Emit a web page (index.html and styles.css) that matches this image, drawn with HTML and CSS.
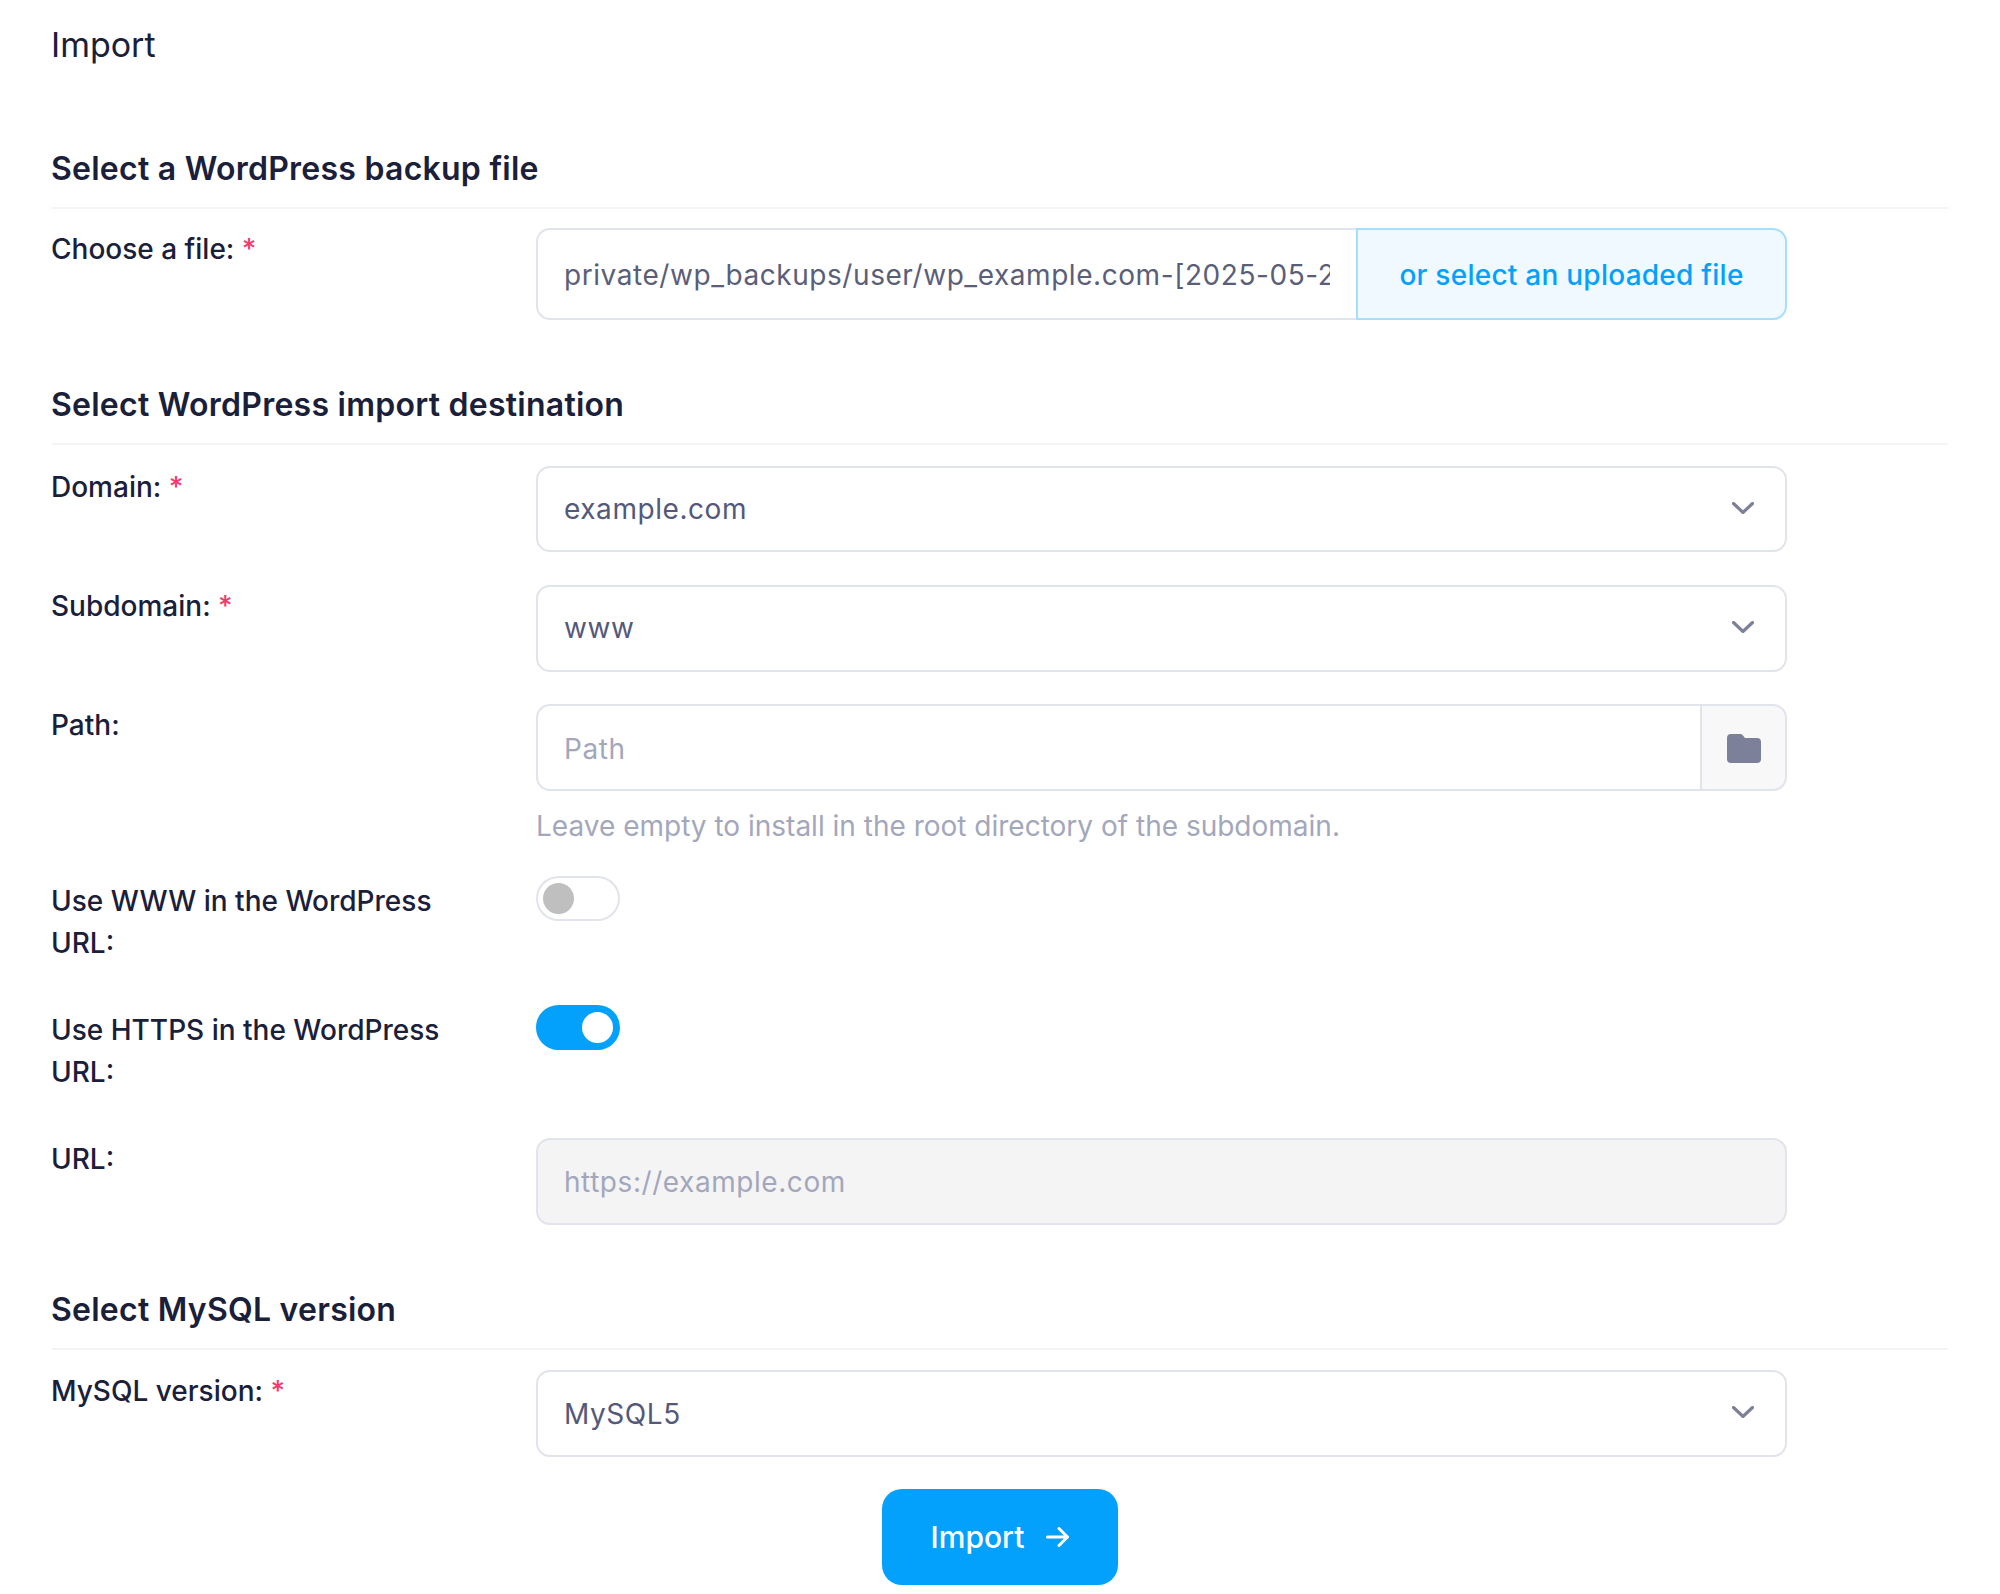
FILE: index.html
```html
<!DOCTYPE html>
<html lang="en">
<head>
<meta charset="utf-8">
<title>Import</title>
<link rel="stylesheet" href="styles.css">
</head>
<body>
<main class="page">
  <h1 class="page-title">Import</h1>
  <form class="form">
    <section class="section section-first">
      <h2 class="section-title">Select a WordPress backup file</h2>
      <div class="row">
        <label class="label">Choose a file: <span class="req">*</span></label>
        <div class="control">
          <div class="group group-file">
            <input class="input input-file" type="text" value="private/wp_backups/user/wp_example.com-[2025-05-20_12-00-00].tar.gz">
            <button type="button" class="file-btn">or select an uploaded file</button>
          </div>
        </div>
      </div>
    </section>
    <section class="section">
      <h2 class="section-title section-title-dest">Select WordPress import destination</h2>
      <div class="row">
        <label class="label">Domain: <span class="req">*</span></label>
        <div class="control">
          <div class="select"><span>example.com</span>
            <svg class="chev" viewBox="0 0 22 12" width="22" height="12"><path d="M1.500 1.500 11 10.500 20.500 1.500" fill="none" stroke="#7d8099" stroke-width="3.200" stroke-linecap="round" stroke-linejoin="miter"/></svg>
          </div>
        </div>
      </div>
      <div class="row">
        <label class="label">Subdomain: <span class="req">*</span></label>
        <div class="control">
          <div class="select"><span>www</span>
            <svg class="chev" viewBox="0 0 22 12" width="22" height="12"><path d="M1.500 1.500 11 10.500 20.500 1.500" fill="none" stroke="#7d8099" stroke-width="3.200" stroke-linecap="round" stroke-linejoin="miter"/></svg>
          </div>
        </div>
      </div>
      <div class="row row-path">
        <label class="label">Path:</label>
        <div class="control">
          <div class="group">
            <input class="input input-path" type="text" placeholder="Path">
            <span class="addon">
              <svg viewBox="0 0 34 30" width="34" height="30"><path d="M4 1h9c1.400 0 2.400.600 3.200 1.700L18 5h12a4 4 0 0 1 4 4v17a4 4 0 0 1-4 4H4a4 4 0 0 1-4-4V5a4 4 0 0 1 4-4z" fill="#7d8099"/></svg>
            </span>
          </div>
          <p class="help">Leave empty to install in the root directory of the subdomain.</p>
        </div>
      </div>
      <div class="row row-toggle">
        <label class="label">Use WWW in the WordPress URL:</label>
        <div class="control"><span class="toggle"><span class="knob"></span></span></div>
      </div>
      <div class="row row-toggle row-toggle-last">
        <label class="label">Use HTTPS in the WordPress URL:</label>
        <div class="control"><span class="toggle toggle-on"><span class="knob"></span></span></div>
      </div>
      <div class="row">
        <label class="label label-url">URL:</label>
        <div class="control"><input class="input input-disabled" type="text" value="https://example.com" disabled></div>
      </div>
    </section>
    <section class="section section-last">
      <h2 class="section-title">Select MySQL version</h2>
      <div class="row">
        <label class="label">MySQL version: <span class="req">*</span></label>
        <div class="control">
          <div class="select select-mysql"><span>MySQL5</span>
            <svg class="chev" viewBox="0 0 22 12" width="22" height="12"><path d="M1.500 1.500 11 10.500 20.500 1.500" fill="none" stroke="#7d8099" stroke-width="3.200" stroke-linecap="round" stroke-linejoin="miter"/></svg>
          </div>
        </div>
      </div>
    </section>
    <div class="actions">
      <button type="button" class="submit">Import
        <svg class="arrow" viewBox="0 0 23 20" width="23" height="20"><path d="M1.500 10H21.500M13 1.500l8.500 8.500-8.500 8.500" fill="none" stroke="#fff" stroke-width="3" stroke-linecap="round" stroke-linejoin="round"/></svg>
      </button>
    </div>
  </form>
</main>
</body>
</html>
```
FILE: styles.css
```css
* { box-sizing: border-box; }
html, body { margin: 0; padding: 0; background: #fff; }
body { font-family: Inter, "Liberation Sans", sans-serif; font-size: 28px; line-height: 42px; color: #1a2039; }
.page { padding: 22px 52px 9px; }
.page-title { margin: 0; font-size: 34px; line-height: 46px; font-weight: 400; text-indent: -1px; }
.section-first { margin-top: 81px; }
.section + .section { margin-top: 65px; }
.section-last.section { margin-top: 65.33px; }
.section-title { margin: 0 0 20.67px; padding-bottom: 18px; font-size: 32px; line-height: 40px; font-weight: 600; letter-spacing: 0.25px; text-indent: -1px; border-bottom: 2px solid #f4f4f6; }
.section-first .section-title { margin-bottom: 19px; }
.section-last .section-title { margin-bottom: 20px; }
.row { display: flex; margin-bottom: 32.67px; }
.row-path { margin-bottom: 29px; }
.row-toggle { margin-bottom: 41px; }
.row-toggle-last { margin-bottom: 45px; }
.section .row:last-child { margin-bottom: 0; }
.label { display: block; flex: 0 0 485px; margin-left: -1px; padding: 0 40px 0 0; font-weight: 500; }
.row-toggle .label { padding-top: 4px; }
.req { color: #f5386e; }
.control { width: 1251px; }
.input { display: block; font: inherit; letter-spacing: 0.56px; height: 86.67px; width: 100%; padding: 21px 26px 19px; border: 2px solid #e2e4ec; border-radius: 14px; color: #5a5e78; background: #fff; outline: none; }
.input::placeholder { color: #a3a7bb; opacity: 1; }
.input-disabled { background: #f4f4f5; color: #a3a7bb; -webkit-text-fill-color: #a3a7bb; opacity: 1; }
.group { display: flex; width: 100%; }
.group-file { height: 92px; }
.input-file { flex: 1; min-width: 0; height: 92px; padding: 22px 26px 20px; border-right: 0; border-radius: 14px 0 0 14px; }
.file-btn { flex: 0 0 431px; font: inherit; font-weight: 500; letter-spacing: 0.25px; color: #03a1fc; background: #f0f9ff; border: 2px solid #a6defe; border-radius: 0 14px 14px 0; padding: 2px 0 0; }
.input-path { flex: 1; min-width: 0; border-right: 0; border-radius: 14px 0 0 14px; }
.addon { flex: 0 0 87px; display: flex; align-items: center; justify-content: center; background: #f8f8f9; border: 2px solid #e2e4ec; border-radius: 0 14px 14px 0; }
.select { position: relative; display: flex; align-items: center; height: 86.67px; padding: 0 26px; border: 2px solid #e2e4ec; border-radius: 14px; color: #54587a; letter-spacing: 0.56px; }
.select-mysql { padding-top: 1px; }
.chev { position: absolute; right: 31px; top: 34px; }
.help { margin: 14px 0 0; color: #a3a7bb; font-size: 28px; line-height: 42px; }
.toggle { display: block; position: relative; width: 84px; height: 45px; border: 2px solid #e2e4ec; border-radius: 24px; background: #fff; }
.knob { position: absolute; left: 5px; top: 5px; width: 31px; height: 31px; border-radius: 50%; background: #bfbfbf; }
.toggle-on { background: #03a1fc; border-color: #03a1fc; }
.toggle-on .knob { left: auto; right: 5px; background: #fff; }
.actions { display: flex; justify-content: center; margin-top: 32.33px; }
.submit { display: flex; align-items: center; justify-content: center; gap: 22px; width: 236px; height: 96px; font: inherit; font-size: 30px; font-weight: 500; color: #fff; background: #03a1fc; border: 0; border-radius: 20px; }
.arrow { margin-top: 1px; }
```
